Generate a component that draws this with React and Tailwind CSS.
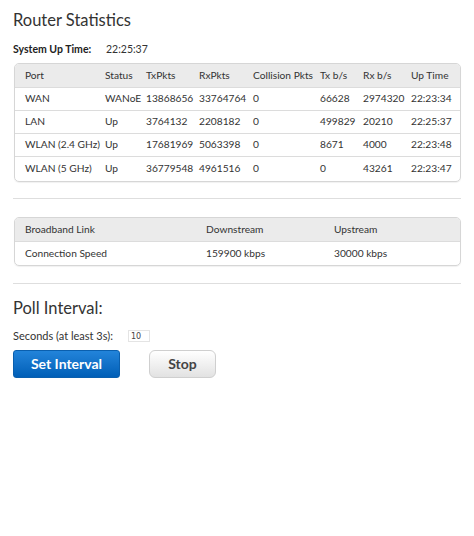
const ports = [
  { port: 'WAN', status: 'WANoE', tx: '13868656', rx: '33764764', col: '0', txb: '66628', rxb: '2974320', up: '22:23:34' },
  { port: 'LAN', status: 'Up', tx: '3764132', rx: '2208182', col: '0', txb: '499829', rxb: '20210', up: '22:25:37' },
  { port: 'WLAN (2.4 GHz)', status: 'Up', tx: '17681969', rx: '5063398', col: '0', txb: '8671', rxb: '4000', up: '22:23:48' },
  { port: 'WLAN (5 GHz)', status: 'Up', tx: '36779548', rx: '4961516', col: '0', txb: '0', rxb: '43261', up: '22:23:47' },
];

export default function App() {
  return (
    <div className="min-h-screen bg-white px-[13px] pt-[10px] text-[#333] font-['Lato','Open_Sans',sans-serif]">
      <h1 className="text-[16.5px] leading-[20px] text-[#333]">Router Statistics</h1>

      <div className="mt-[12px] flex text-[10.5px] leading-[14px]">
        <span className="w-[93px] font-bold text-[#222]">System Up Time:</span>
        <span>22:25:37</span>
      </div>

      {/* port stats */}
      <div className="mt-[7px] ml-px overflow-hidden rounded-[5px] border border-[#d6d6d6] shadow-[0_1px_1px_rgba(0,0,0,0.06)]">
        <table className="w-full table-fixed border-collapse text-[10.2px] text-left">
          <colgroup>
            <col className="w-[86px]" />
            <col className="w-[41px]" />
            <col className="w-[53px]" />
            <col className="w-[54px]" />
            <col className="w-[67px]" />
            <col className="w-[43px]" />
            <col className="w-[48px]" />
            <col />
          </colgroup>
          <thead>
            <tr className="h-[23px] bg-[#ebebeb]">
              <th className="pl-[10px] font-normal">Port</th>
              <th className="pl-1 font-normal">Status</th>
              <th className="pl-1 font-normal">TxPkts</th>
              <th className="pl-1 font-normal">RxPkts</th>
              <th className="pl-1 font-normal whitespace-nowrap">Collision Pkts</th>
              <th className="pl-1 font-normal whitespace-nowrap">Tx b/s</th>
              <th className="pl-1 font-normal whitespace-nowrap">Rx b/s</th>
              <th className="pl-1 font-normal whitespace-nowrap">Up Time</th>
            </tr>
          </thead>
          <tbody>
            {ports.map((p, i) => (
              <tr key={p.port} className={`border-t border-[#dcdcdc] ${i === ports.length - 1 ? 'h-[25px]' : 'h-[23px]'}`}>
                <td className="pl-[10px] whitespace-nowrap">{p.port}</td>
                <td className="pl-1">{p.status}</td>
                <td className="pl-1">{p.tx}</td>
                <td className="pl-1">{p.rx}</td>
                <td className="pl-1">{p.col}</td>
                <td className="pl-1">{p.txb}</td>
                <td className="pl-1">{p.rxb}</td>
                <td className="pl-1">{p.up}</td>
              </tr>
            ))}
          </tbody>
        </table>
      </div>

      <hr className="mt-[16px] border-t border-[#dedede]" />

      {/* broadband */}
      <div className="mt-[18px] ml-px overflow-hidden rounded-[5px] border border-[#d6d6d6] shadow-[0_1px_1px_rgba(0,0,0,0.06)]">
        <table className="w-full table-fixed border-collapse text-[10.2px] text-left">
          <colgroup>
            <col className="w-[187px]" />
            <col className="w-[128px]" />
            <col />
          </colgroup>
          <thead>
            <tr className="h-[23px] bg-[#ebebeb]">
              <th className="pl-[10px] font-normal">Broadband Link</th>
              <th className="pl-1 font-normal">Downstream</th>
              <th className="pl-1 font-normal">Upstream</th>
            </tr>
          </thead>
          <tbody>
            <tr className="h-[24px] border-t border-[#dcdcdc]">
              <td className="pl-[10px]">Connection Speed</td>
              <td className="pl-1">159900 kbps</td>
              <td className="pl-1">30000 kbps</td>
            </tr>
          </tbody>
        </table>
      </div>

      <hr className="mt-[17px] border-t border-[#dedede]" />

      <h2 className="mt-[14px] text-[16.5px] leading-[20px]">Poll Interval:</h2>

      <div className="mt-[10px] flex items-center text-[11px]">
        <span>Seconds (at least 3s):</span>
        <input
          defaultValue="10"
          className="ml-[15px] h-[12px] w-[22px] border border-[#e4e4e4] px-[2px] text-[8px] leading-[10px] text-[#444] outline-none font-['DejaVu_Sans',sans-serif]"
        />
      </div>

      <div className="mt-[5px] flex items-center gap-[29px]">
        <button className="h-[28px] w-[107px] rounded-[3px] border border-[#0a5fae] bg-gradient-to-b from-[#2284da] to-[#005fb7] text-[14px] font-bold text-white">
          Set Interval
        </button>
        <button className="h-[28px] w-[67px] rounded-[6px] border border-[#cfcfcf] bg-gradient-to-b from-white to-[#e2e2e2] text-[14px] font-bold text-[#444]">
          Stop
        </button>
      </div>
    </div>
  );
}
